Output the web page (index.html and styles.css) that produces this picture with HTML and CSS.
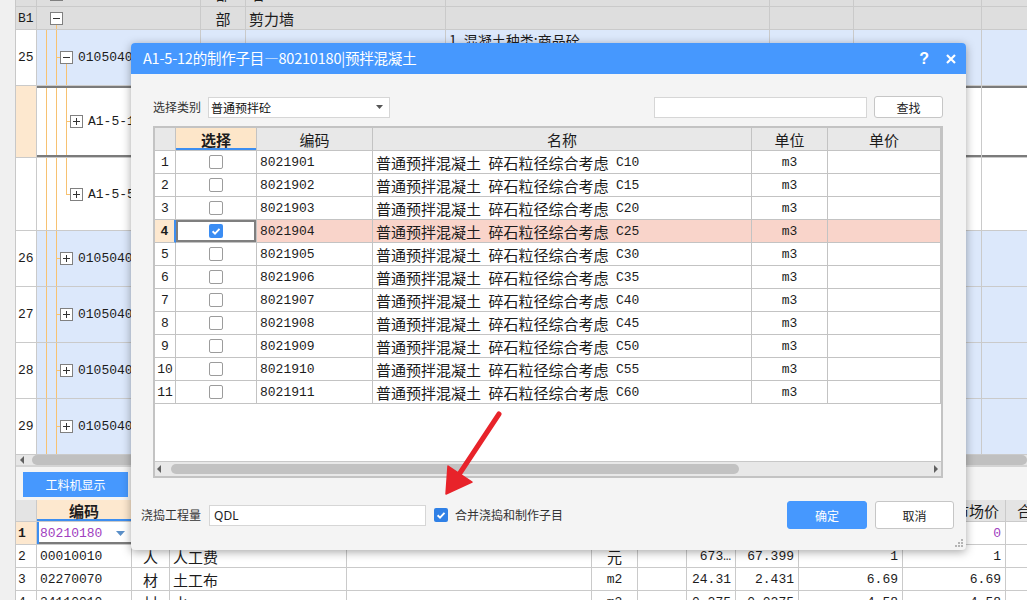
FILE: index.html
```html
<!DOCTYPE html>
<html lang="zh-CN">
<head>
<meta charset="utf-8">
<title>制作子目</title>
<link rel="stylesheet" href="styles.css">
</head>
<body>
<div class="app">
  <div class="side"></div>
  <div class="main">
    <div class="upper">
      <div class="utable">
        <div class="urow gray h30">
          <div class="rn m">24</div>
          <div class="tree t-top"><svg class="tb" viewBox="0 0 13 13"><rect x=".5" y=".5" width="12" height="12" fill="#fff" stroke="#808080"/><path d="M3 6.5h7" stroke="#333"/></svg></div>
          <div class="ctr">部</div><div class="pl">墙</div><div></div><div></div><div></div><div></div>
        </div>
        <div class="urow gray h23">
          <div class="rn m">B1</div>
          <div class="tree t-b1"><svg class="tb" viewBox="0 0 13 13"><rect x=".5" y=".5" width="12" height="12" fill="#fff" stroke="#808080"/><path d="M3 6.5h7" stroke="#333"/></svg></div>
          <div class="ctr">部</div><div class="pl">剪力墙</div><div></div><div></div><div></div><div></div>
        </div>
        <div class="urow blue h56">
          <div class="rn m">25</div>
          <div class="tree t-l2open lv2"><svg class="tb" viewBox="0 0 13 13"><rect x=".5" y=".5" width="12" height="12" fill="#fff" stroke="#808080"/><path d="M3 6.5h7" stroke="#333"/></svg><span class="m tt">010504001001</span></div>
          <div></div><div></div><div class="desc">1. 混凝土种类:商品砼</div><div></div><div></div><div></div>
        </div>
        <div class="urow sel h72">
          <div class="rn"></div>
          <div class="tree t-l3 lv3"><svg class="tb" viewBox="0 0 13 13"><rect x=".5" y=".5" width="12" height="12" fill="#fff" stroke="#808080"/><path d="M3 6.5h7M6.5 3v7" stroke="#333"/></svg><span class="m tt">A1-5-12</span></div>
          <div></div><div></div><div></div><div></div><div></div><div></div>
        </div>
        <div class="urow h73">
          <div class="rn"></div>
          <div class="tree t-l3last lv3"><svg class="tb" viewBox="0 0 13 13"><rect x=".5" y=".5" width="12" height="12" fill="#fff" stroke="#808080"/><path d="M3 6.5h7M6.5 3v7" stroke="#333"/></svg><span class="m tt">A1-5-5</span></div>
          <div></div><div></div><div></div><div></div><div></div><div></div>
        </div>
        <div class="urow blue h56">
          <div class="rn m">26</div>
          <div class="tree t-l2 lv2"><svg class="tb" viewBox="0 0 13 13"><rect x=".5" y=".5" width="12" height="12" fill="#fff" stroke="#808080"/><path d="M3 6.5h7M6.5 3v7" stroke="#333"/></svg><span class="m tt">010504001002</span></div>
          <div></div><div></div><div></div><div></div><div></div><div></div>
        </div>
        <div class="urow blue h56">
          <div class="rn m">27</div>
          <div class="tree t-l2 lv2"><svg class="tb" viewBox="0 0 13 13"><rect x=".5" y=".5" width="12" height="12" fill="#fff" stroke="#808080"/><path d="M3 6.5h7M6.5 3v7" stroke="#333"/></svg><span class="m tt">010504001003</span></div>
          <div></div><div></div><div></div><div></div><div></div><div></div>
        </div>
        <div class="urow blue h56">
          <div class="rn m">28</div>
          <div class="tree t-l2 lv2"><svg class="tb" viewBox="0 0 13 13"><rect x=".5" y=".5" width="12" height="12" fill="#fff" stroke="#808080"/><path d="M3 6.5h7M6.5 3v7" stroke="#333"/></svg><span class="m tt">010504001004</span></div>
          <div></div><div></div><div></div><div></div><div></div><div></div>
        </div>
        <div class="urow blue h56">
          <div class="rn m">29</div>
          <div class="tree t-l2 lv2"><svg class="tb" viewBox="0 0 13 13"><rect x=".5" y=".5" width="12" height="12" fill="#fff" stroke="#808080"/><path d="M3 6.5h7M6.5 3v7" stroke="#333"/></svg><span class="m tt">010504001005</span></div>
          <div></div><div></div><div></div><div></div><div></div><div></div>
        </div>
      </div>
    </div>
    <div class="hscroll">
      <svg class="sarr" viewBox="0 0 4 8"><path d="M4 0v8L0 4z" fill="#606060"/></svg>
      <div class="hthumb"></div>
    </div>
    <div class="tabbar">
      <div class="tab">工料机显示</div>
    </div>
    <div class="ltable">
      <div class="lrow head">
        <div class="rn"></div>
        <div class="ctr hsel">编码</div>
        <div class="ctr">类别</div>
        <div class="ctr">名称</div>
        <div class="ctr">规格型号</div>
        <div class="ctr">单位</div>
        <div class="ctr">损耗率</div>
        <div class="ctr">含量</div>
        <div class="ctr">数量</div>
        <div class="ctr">定额价</div>
        <div class="ctr">不含税市场价</div>
        <div class="pl2">合价</div>
      </div>
      <div class="lrow cur">
        <div class="rn m">1</div>
        <div class="code"><span class="m purple">80210180</span><svg class="dd" viewBox="0 0 9 5"><path d="M0 0h9L4.5 5z" fill="#5a8fc8"/></svg></div>
        <div></div><div></div><div></div><div></div><div></div><div></div><div></div><div></div>
        <div class="num m purple">0</div><div></div>
      </div>
      <div class="lrow">
        <div class="rn m">2</div>
        <div class="m pl">00010010</div>
        <div class="ctr">人</div>
        <div class="pl">人工费</div>
        <div></div>
        <div class="ctr">元</div>
        <div></div>
        <div class="num m">673…</div>
        <div class="num m">67.399</div>
        <div class="num m">1</div>
        <div class="num m">1</div>
        <div></div>
      </div>
      <div class="lrow">
        <div class="rn m">3</div>
        <div class="m pl">02270070</div>
        <div class="ctr">材</div>
        <div class="pl">土工布</div>
        <div></div>
        <div class="ctr m">m2</div>
        <div></div>
        <div class="num m">24.31</div>
        <div class="num m">2.431</div>
        <div class="num m">6.69</div>
        <div class="num m">6.69</div>
        <div></div>
      </div>
      <div class="lrow">
        <div class="rn m">4</div>
        <div class="m pl">34110010</div>
        <div class="ctr">材</div>
        <div class="pl">水</div>
        <div></div>
        <div class="ctr m">m3</div>
        <div></div>
        <div class="num m">0.275</div>
        <div class="num m">0.0275</div>
        <div class="num m">4.58</div>
        <div class="num m">4.58</div>
        <div></div>
      </div>
    </div>
  </div>
</div>

<div class="dialog">
  <div class="dlg-title">
    <span class="dlg-caption">A1-5-12的制作子目—80210180|预拌混凝土</span>
    <span class="dlg-help">?</span>
    <svg class="dlg-close" viewBox="0 0 10 10"><path d="M1 1L9 9M9 1L1 9" stroke="#fff" stroke-width="2.2"/></svg>
  </div>
  <div class="dlg-body">
    <div class="toolbar">
      <span class="lbl">选择类别</span>
      <div class="select"><span>普通预拌砼</span><svg class="sel-arrow" viewBox="0 0 7 4"><path d="M0 0h7L3.5 4z" fill="#555"/></svg></div>
      <div class="spacer"></div>
      <div class="input search"></div>
      <div class="btn">查找</div>
    </div>
    <div class="grid">
      <div class="grow ghead">
        <div></div>
        <div class="gsel-head">选择</div>
        <div>编码</div>
        <div>名称</div>
        <div>单位</div>
        <div>单价</div>
      </div>
      <div class="grow"><div class="gn m">1</div><div class="gc"><span class="cb"></span></div><div class="m gcode">8021901</div><div class="gname">普通预拌混凝土&ensp;碎石粒径综合考虑&ensp;<span class="m">C10</span></div><div class="gu m">m3</div><div></div></div>
      <div class="grow"><div class="gn m">2</div><div class="gc"><span class="cb"></span></div><div class="m gcode">8021902</div><div class="gname">普通预拌混凝土&ensp;碎石粒径综合考虑&ensp;<span class="m">C15</span></div><div class="gu m">m3</div><div></div></div>
      <div class="grow"><div class="gn m">3</div><div class="gc"><span class="cb"></span></div><div class="m gcode">8021903</div><div class="gname">普通预拌混凝土&ensp;碎石粒径综合考虑&ensp;<span class="m">C20</span></div><div class="gu m">m3</div><div></div></div>
      <div class="grow gsel"><div class="gn m">4</div><div class="gc"><svg class="cbon" viewBox="0 0 14 14"><rect width="14" height="14" rx="2" fill="#3b8df3"/><path d="M3.6 7.3l2.4 2.3 4.5-4.7" fill="none" stroke="#fff" stroke-width="1.9"/></svg></div><div class="m gcode">8021904</div><div class="gname">普通预拌混凝土&ensp;碎石粒径综合考虑&ensp;<span class="m">C25</span></div><div class="gu m">m3</div><div></div></div>
      <div class="grow"><div class="gn m">5</div><div class="gc"><span class="cb"></span></div><div class="m gcode">8021905</div><div class="gname">普通预拌混凝土&ensp;碎石粒径综合考虑&ensp;<span class="m">C30</span></div><div class="gu m">m3</div><div></div></div>
      <div class="grow"><div class="gn m">6</div><div class="gc"><span class="cb"></span></div><div class="m gcode">8021906</div><div class="gname">普通预拌混凝土&ensp;碎石粒径综合考虑&ensp;<span class="m">C35</span></div><div class="gu m">m3</div><div></div></div>
      <div class="grow"><div class="gn m">7</div><div class="gc"><span class="cb"></span></div><div class="m gcode">8021907</div><div class="gname">普通预拌混凝土&ensp;碎石粒径综合考虑&ensp;<span class="m">C40</span></div><div class="gu m">m3</div><div></div></div>
      <div class="grow"><div class="gn m">8</div><div class="gc"><span class="cb"></span></div><div class="m gcode">8021908</div><div class="gname">普通预拌混凝土&ensp;碎石粒径综合考虑&ensp;<span class="m">C45</span></div><div class="gu m">m3</div><div></div></div>
      <div class="grow"><div class="gn m">9</div><div class="gc"><span class="cb"></span></div><div class="m gcode">8021909</div><div class="gname">普通预拌混凝土&ensp;碎石粒径综合考虑&ensp;<span class="m">C50</span></div><div class="gu m">m3</div><div></div></div>
      <div class="grow"><div class="gn m">10</div><div class="gc"><span class="cb"></span></div><div class="m gcode">8021910</div><div class="gname">普通预拌混凝土&ensp;碎石粒径综合考虑&ensp;<span class="m">C55</span></div><div class="gu m">m3</div><div></div></div>
      <div class="grow"><div class="gn m">11</div><div class="gc"><span class="cb"></span></div><div class="m gcode">8021911</div><div class="gname">普通预拌混凝土&ensp;碎石粒径综合考虑&ensp;<span class="m">C60</span></div><div class="gu m">m3</div><div></div></div>
      <div class="gfill"></div>
      <div class="gscroll">
        <svg class="garr" viewBox="0 0 4 8"><path d="M4 0v8L0 4z" fill="#606060"/></svg>
        <div class="gthumb"></div>
        <svg class="garr right" viewBox="0 0 4 8"><path d="M0 0v8L4 4z" fill="#606060"/></svg>
      </div>
    </div>
    <div class="footer">
      <span class="lbl">浇捣工程量</span>
      <div class="input qty">QDL</div>
      <svg class="fcb" viewBox="0 0 14 14"><rect width="14" height="14" rx="2" fill="#2f80e6"/><path d="M3.6 7.3l2.4 2.3 4.5-4.7" fill="none" stroke="#fff" stroke-width="1.9"/></svg>
      <span class="lbl">合并浇捣和制作子目</span>
      <div class="spacer"></div>
      <div class="btn primary">确定</div>
      <div class="btn cancel">取消</div>
    </div>
    <svg class="grip" viewBox="0 0 8 8"><path d="M6 0h2v2H6zM3 3h2v2H3zM6 3h2v2H6zM0 6h2v2H0zM3 6h2v2H3zM6 6h2v2H6z" fill="#b4b4b4"/></svg>
  </div>
</div>

<svg class="arrow" viewBox="0 0 1027 600">
  <path d="M499 414L458 476" stroke="#e8232a" stroke-width="5" stroke-linecap="round" fill="none"/>
  <path d="M446 494L448 466L472 482z" fill="#e8232a" stroke="#e8232a" stroke-width="1.5" stroke-linejoin="round"/>
</svg>
</body>
</html>
```

FILE: styles.css
```css
* { box-sizing: border-box; }
html, body { margin: 0; padding: 0; }
body {
  width: 1027px;
  height: 600px;
  overflow: hidden;
  position: relative;
  background: #f2f2f2;
  color: #1c1c1c;
  font-family: "Noto Sans CJK SC", "Noto Sans", sans-serif;
  font-size: 15px;
}
.m { font-family: "Liberation Mono", "Noto Sans CJK SC", monospace; font-size: 13px; }

.app { display: flex; width: 1027px; height: 600px; }
.side { width: 16px; flex: none; background: #f0f0f0; border-right: 1px solid #c8c8c8; }
.main { flex: 1; min-width: 0; display: flex; flex-direction: column; overflow: hidden; }

/* upper table */
.upper { height: 455px; flex: none; overflow: hidden; background: #fff; }
.utable { margin-top: -23px; }
.urow { display: grid; grid-template-columns: 21px 164px 45px 200px 324px 84px 128px 60px; }
.urow > div {
  border-right: 1px solid #cacaca;
  border-bottom: 1px solid #cacaca;
  display: flex;
  align-items: center;
  white-space: nowrap;
  overflow: hidden;
  line-height: 1;
}
.h30 { height: 30px; }
.h23 { height: 23px; }
.h56 { height: 56px; }
.h72 { height: 72px; }
.h73 { height: 73px; }
.urow.h30 > div { align-items: flex-end; padding-bottom: 5px; }
.rn { background: #fff; padding-left: 2px; }
.urow.gray > div { background-color: #dedede; }
.urow.blue > div:not(.rn) { background-color: #dce8fb; }
.urow.sel > .rn { background: #fde8cf; }
.urow.sel > div:not(.rn) { box-shadow: inset 0 2px 0 #7b7b7b, inset 0 -2px 0 #7b7b7b; }
.urow.sel > .tree { box-shadow: inset 2px 0 0 #3d8ef0, inset 0 2px 0 #7b7b7b, inset 0 -2px 0 #7b7b7b; }
.ctr { justify-content: center; }
.pl { padding-left: 3px; }
.pl2 { padding-left: 11px; }
.desc { align-self: stretch; align-items: flex-start !important; padding: 3px 0 0 3px; font-size: 14px; }

.tree { padding-left: 13px; background-repeat: no-repeat; }
.tree.lv2 { padding-left: 23px; }
.tree.lv3 { padding-left: 33px; }
.tb { width: 13px; height: 13px; flex: none; display: block; }
.tt { margin-left: 5px; }
.t-b1 {
  background-image: linear-gradient(#f7c272, #f7c272);
  background-position: 19px 100%;
  background-size: 1px calc(50% - 6px);
}
.t-l2open {
  background-image: linear-gradient(#f7c272, #f7c272), linear-gradient(#f7c272, #f7c272), linear-gradient(#f7c272, #f7c272), linear-gradient(#f7c272, #f7c272);
  background-position: 9px 0, 19px 0, 19px 50%, 29px 100%;
  background-size: 1px 100%, 1px 100%, 4px 1px, 1px calc(50% - 6px);
}
.t-l2 {
  background-image: linear-gradient(#f7c272, #f7c272), linear-gradient(#f7c272, #f7c272), linear-gradient(#f7c272, #f7c272);
  background-position: 9px 0, 19px 0, 19px 50%;
  background-size: 1px 100%, 1px 100%, 4px 1px;
}
.t-l3 {
  background-image: linear-gradient(#f7c272, #f7c272), linear-gradient(#f7c272, #f7c272), linear-gradient(#f7c272, #f7c272), linear-gradient(#f7c272, #f7c272);
  background-position: 9px 0, 19px 0, 29px 0, 29px 50%;
  background-size: 1px 100%, 1px 100%, 1px 100%, 4px 1px;
}
.t-l3last {
  background-image: linear-gradient(#f7c272, #f7c272), linear-gradient(#f7c272, #f7c272), linear-gradient(#f7c272, #f7c272), linear-gradient(#f7c272, #f7c272);
  background-position: 9px 0, 19px 0, 29px 0, 29px 50%;
  background-size: 1px 100%, 1px 100%, 1px 50%, 4px 1px;
}

/* upper horizontal scrollbar */
.hscroll {
  height: 12px;
  flex: none;
  background: #e6e6e6;
  display: flex;
  align-items: center;
  padding-left: 4px;
  gap: 8px;
  border-bottom: 2px solid #d4d4d4;
}
.sarr { width: 4px; height: 8px; flex: none; }
.hthumb { flex: 1; height: 10px; background: #c0c0c0; border-radius: 5px; }

.tabbar { height: 33px; flex: none; padding: 5px 0 0 7px; background: #f4f4f4; }
.tab {
  width: 105px;
  height: 25px;
  background: #4698fe;
  color: #fff;
  font-size: 12px;
  display: flex;
  align-items: center;
  justify-content: center;
}

/* lower table */
.ltable { background: #fff; }
.lrow { display: grid; grid-template-columns: 21px 95px 38px 177px 245px 46px 49px 49px 63px 104px 103px 52px; height: 23px; }
.lrow > div {
  border-right: 1px solid #cacaca;
  border-bottom: 1px solid #cacaca;
  display: flex;
  align-items: center;
  white-space: nowrap;
  overflow: hidden;
  line-height: 1;
}
.lrow.head { height: 22px; }
.lrow.head > div { background: #e4e4e4; }
.lrow.head > .hsel { background: #fde8cf; font-weight: bold; box-shadow: inset 0 -2px 0 #3d8ef0; }
.lrow.cur > .rn { background: #fde8cf; font-weight: bold; }
.code {
  justify-content: space-between;
  padding: 0 6px 0 3px;
  box-shadow: inset 2px 0 0 #3d8ef0, inset 0 -2px 0 #7b7b7b;
}
.purple { color: #a040c0; }
.dd { width: 9px; height: 5px; }
.num { justify-content: flex-end; padding-right: 4px; }

/* dialog */
.dialog {
  position: absolute;
  left: 131px;
  top: 43px;
  width: 835px;
  height: 507px;
  background: #f4f4f4;
  border-radius: 4px;
  box-shadow: 0 2px 10px rgba(0, 0, 0, 0.35);
  overflow: hidden;
  display: flex;
  flex-direction: column;
}
.dlg-title {
  height: 31px;
  flex: none;
  background: #4698fe;
  color: #fff;
  display: flex;
  align-items: center;
  padding: 0 9px 0 12px;
}
.dlg-caption { flex: 1; font-size: 14.5px; letter-spacing: -0.2px; line-height: 1; }
.dlg-help { font-family: "Liberation Sans", sans-serif; font-weight: bold; font-size: 16px; margin-right: 17px; line-height: 1; }
.dlg-close { width: 10px; height: 10px; margin-right: 1px; }

.dlg-body { flex: 1; position: relative; display: flex; flex-direction: column; }
.lbl { font-size: 12px; color: #333; line-height: 1; white-space: nowrap; }
.spacer { flex: 1; }
.toolbar {
  margin: 22px 23px 0 22px;
  height: 22px;
  display: flex;
  align-items: center;
  gap: 7px;
}
.select {
  width: 182px;
  height: 21px;
  background: #fff;
  border: 1px solid #d6d6d6;
  display: flex;
  align-items: center;
  justify-content: space-between;
  padding: 0 6px 0 2px;
  font-size: 12px;
  color: #111;
}
.sel-arrow { width: 7px; height: 4px; }
.input { background: #fff; border: 1px solid #d6d6d6; height: 21px; }
.search { width: 213px; }
.btn {
  height: 22px;
  width: 69px;
  background: #fff;
  border: 1px solid #c6c6c6;
  border-radius: 3px;
  font-size: 12px;
  color: #222;
  display: flex;
  align-items: center;
  justify-content: center;
}

.grid {
  margin: 8px 23px 0 22px;
  height: 352px;
  border: 2px solid #c3c3c3;
  background: #fff;
  display: flex;
  flex-direction: column;
  overflow: hidden;
}
.grow { display: grid; grid-template-columns: 21px 81px 116px 379px 76px 1fr; height: 23px; flex: none; }
.grow > div {
  border-right: 1px solid #c3c3c3;
  border-bottom: 1px solid #c3c3c3;
  display: flex;
  align-items: center;
  white-space: nowrap;
  overflow: hidden;
  line-height: 1;
}
.ghead > div { background: #e8e8e8; justify-content: center; }
.ghead > .gsel-head { background: #fde6c9; font-weight: bold; box-shadow: inset 0 -2px 0 #3d8ef0; }
.gn { justify-content: center; }
.gc { justify-content: center; }
.gcode { padding-left: 3px; }
.gname { padding-left: 3px; }
.gu { justify-content: center; }
.cb { width: 14px; height: 14px; border: 1px solid #9c9c9c; border-radius: 2px; background: #fff; }
.cbon { width: 14px; height: 14px; }
.gsel > div { background: #f9d4ca; }
.gsel > .gn { background: #fde8cf; font-weight: bold; border-right: 2px solid #3d8ef0; }
.gsel > .gc { background: #fff; box-shadow: inset 0 0 0 2px #7f7f7f; }
.gfill { flex: 1; }
.gscroll {
  height: 15px;
  flex: none;
  background: #e8e8e8;
  border-top: 1px solid #c8c8c8;
  display: flex;
  align-items: center;
  padding: 0 3px 0 2px;
}
.garr { width: 4px; height: 8px; flex: none; }
.gthumb { width: 568px; height: 10px; margin-left: 10px; background: #c2c2c2; border-radius: 5px; }
.garr.right { margin-left: auto; }

.footer {
  margin: 23px 12px 0 10px;
  height: 28px;
  display: flex;
  align-items: center;
}
.footer .lbl:first-child { margin-right: 8px; }
.qty {
  width: 217px;
  padding-left: 4px;
  font-family: "Noto Sans", sans-serif;
  font-size: 12px;
  display: flex;
  align-items: center;
  margin-right: 8px;
}
.fcb { width: 14px; height: 14px; margin-right: 7px; }
.btn.primary {
  width: 80px;
  height: 28px;
  background: #4698fe;
  border-color: #4698fe;
  color: #fff;
  margin-right: 8px;
}
.btn.cancel { width: 79px; height: 28px; }
.grip { position: absolute; right: 3px; bottom: 3px; width: 8px; height: 8px; }

.arrow { position: absolute; left: 0; top: 0; width: 1027px; height: 600px; pointer-events: none; }
```
